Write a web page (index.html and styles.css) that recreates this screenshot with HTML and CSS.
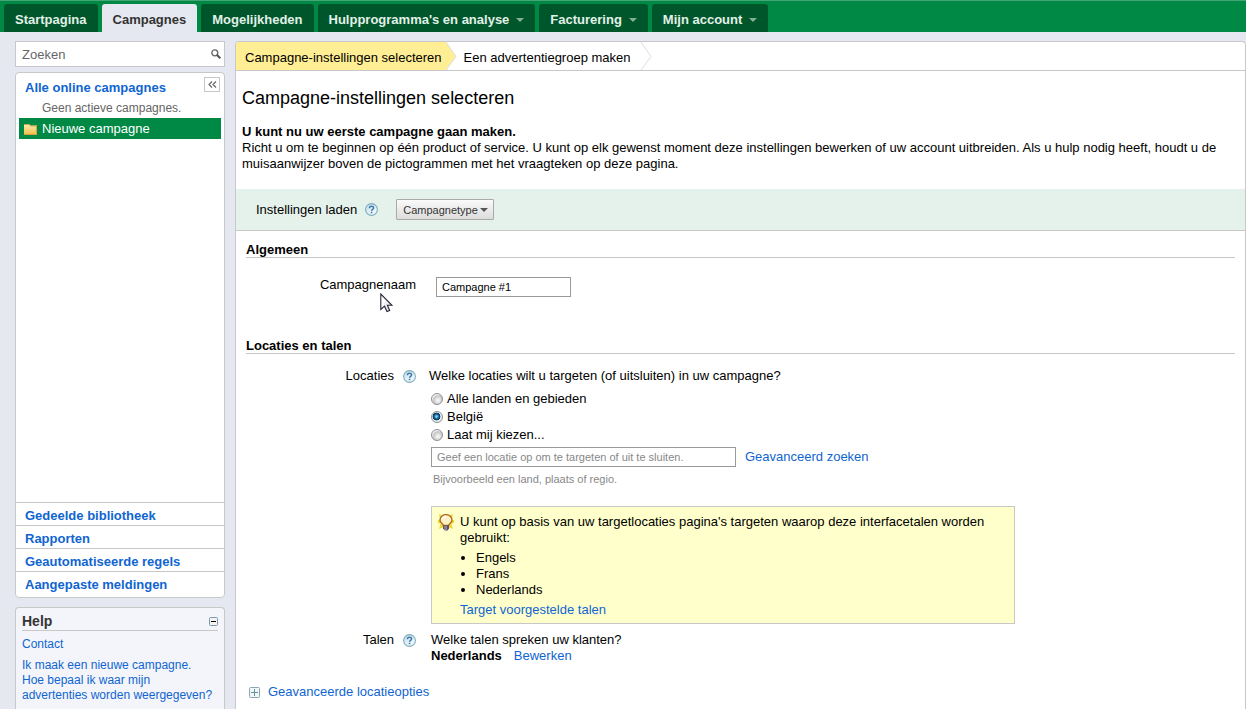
FILE: index.html
```
<!DOCTYPE html>
<html lang="nl">
<head>
<meta charset="utf-8">
<title>Campagne-instellingen selecteren</title>
<link rel="stylesheet" href="styles.css">
</head>
<body>
<svg class="defs" aria-hidden="true">
  <defs>
    <linearGradient id="helpFill" x1="0" y1="0" x2="1" y2="1"><stop offset="0" stop-color="#c4e0ec"/><stop offset="1" stop-color="#fafeff"/></linearGradient>
    <linearGradient id="folderFill" x1="0" y1="0" x2="0" y2="1"><stop offset="0" stop-color="#ffeeb4"/><stop offset="1" stop-color="#eebd4c"/></linearGradient>
    <linearGradient id="cursorFill" x1="0" y1="0" x2="1" y2="1"><stop offset="0.3" stop-color="#fff"/><stop offset="1" stop-color="#cfcfd6"/></linearGradient>
  </defs>
  <symbol id="help" viewBox="0 0 13 13">
    <circle cx="6.5" cy="6.5" r="5.9" fill="url(#helpFill)" stroke="#7fabba" stroke-width="1.1"/>
    <path d="M4.4 5.2c0-1.2.9-1.9 2.1-1.9s2.1.7 2.1 1.7c0 1.400-2 1.300-2 2.700M6.600 8.700v1.500" fill="none" stroke="#3f79b0" stroke-width="1.500"/>
  </symbol>
</svg>

<nav class="tabs">
  <a class="tab" href="#">Startpagina</a>
  <a class="tab tab-active" href="#">Campagnes</a>
  <a class="tab" href="#">Mogelijkheden</a>
  <a class="tab" href="#">Hulpprogramma's en analyse<span class="caret"></span></a>
  <a class="tab" href="#">Facturering<span class="caret"></span></a>
  <a class="tab" href="#">Mijn account<span class="caret"></span></a>
</nav>

<div class="page">
  <aside class="sidebar">
    <form class="search">
      <input class="search-input" type="text" placeholder="Zoeken" aria-label="Zoeken">
      <button class="search-button" type="button" aria-label="Zoek">
        <svg width="10" height="10" viewBox="0 0 10 10"><circle cx="3.800" cy="3.800" r="3" fill="none" stroke="#666" stroke-width="1.300"/><path d="M5.800 5.800L9.300 9.300" stroke="#555" stroke-width="2"/></svg>
      </button>
    </form>

    <section class="panel tree">
      <div class="tree-head">
        <a class="side-link" href="#">Alle online campagnes</a>
        <button class="collapse" type="button" aria-label="Inklappen">
          <svg width="9" height="7" viewBox="0 0 9 7"><path d="M4 .5L1 3.500L4 6.500M8 .5L5 3.500L8 6.500" fill="none" stroke="#666" stroke-width="1.200"/></svg>
        </button>
      </div>
      <p class="tree-empty">Geen actieve campagnes.</p>
      <a class="tree-item" href="#">
        <svg width="13" height="12" viewBox="0 0 13 12"><path d="M0 1H5L6.500 2.500H13V11.500H0Z" fill="url(#folderFill)"/><path d="M0 1.500H5L6.500 3H13" fill="none" stroke="#c9a452"/><path d="M12.500 3V11.500M0 11.500H13" fill="none" stroke="#d9a440"/></svg>
        Nieuwe campagne
      </a>
      <ul class="side-list">
        <li><a class="side-link" href="#">Gedeelde bibliotheek</a></li>
        <li><a class="side-link" href="#">Rapporten</a></li>
        <li><a class="side-link" href="#">Geautomatiseerde regels</a></li>
        <li><a class="side-link" href="#">Aangepaste meldingen</a></li>
      </ul>
    </section>

    <section class="panel helpbox">
      <div class="helpbox-head">
        <h2 class="helpbox-title">Help</h2>
        <button class="minimize" type="button" aria-label="Minimaliseren">
          <svg width="9" height="9" viewBox="0 0 9 9"><rect x=".5" y=".5" width="8" height="8" rx="1" fill="#f5f3ee" stroke="#7898b5"/><path d="M2 4.500H7" stroke="#000"/></svg>
        </button>
      </div>
      <p class="help-contact"><a href="#">Contact</a></p>
      <p class="help-links"><a href="#">Ik maak een nieuwe campagne.</a><br><a href="#">Hoe bepaal ik waar mijn advertenties worden weergegeven?</a></p>
    </section>
  </aside>

  <main class="main">
    <ol class="steps">
      <li class="step step-current">Campagne-instellingen selecteren</li>
      <li class="step-arrow"><svg width="12" height="28" viewBox="0 0 12 28"><path d="M0 0H1L11 14.500L1 28H0Z" fill="#ffee94"/><path d="M1 0L11 14.500L1 28" fill="none" stroke="#ddd"/></svg></li>
      <li class="step step-next">Een advertentiegroep maken</li>
      <li class="step-arrow"><svg width="12" height="28" viewBox="0 0 12 28"><path d="M1 0L11 14.500L1 28" fill="none" stroke="#ddd"/></svg></li>
    </ol>

    <header class="intro">
      <h1 class="title">Campagne-instellingen selecteren</h1>
      <p><strong>U kunt nu uw eerste campagne gaan maken.</strong></p>
      <p>Richt u om te beginnen op één product of service. U kunt op elk gewenst moment deze instellingen bewerken of uw account uitbreiden. Als u hulp nodig heeft, houdt u de muisaanwijzer boven de pictogrammen met het vraagteken op deze pagina.</p>
    </header>

    <div class="load">
      <label for="type">Instellingen laden</label>
      <svg class="help" width="13" height="13"><use href="#help"/></svg>
      <span class="select-wrap">
        <select class="select" id="type"><option>Campagnetype</option></select>
        <span class="select-caret"></span>
      </span>
    </div>

    <section class="section general">
      <h2 class="section-title">Algemeen</h2>
      <div class="row row-name">
        <label class="row-label" for="name">Campagnenaam</label>
        <input class="text name-input" id="name" type="text" value="Campagne #1">
        <svg class="cursor" width="13" height="20" viewBox="0 0 13 20"><path d="M.8 1V16.500L4.500 13.200L7 18.500L9.700 17.500L7.400 12.300H12Z" fill="url(#cursorFill)" stroke="#26263c" stroke-width="1.100"/></svg>
      </div>
    </section>

    <section class="section">
      <h2 class="section-title">Locaties en talen</h2>
      <div class="row row-loc">
        <div class="row-label">Locaties <svg class="help" width="13" height="13"><use href="#help"/></svg></div>
        <fieldset class="locations">
          <legend class="question">Welke locaties wilt u targeten (of uitsluiten) in uw campagne?</legend>
          <div class="inset">
            <label class="option"><input class="radio" type="radio" name="loc">Alle landen en gebieden</label>
            <label class="option"><input class="radio" type="radio" name="loc" checked>België</label>
            <label class="option"><input class="radio" type="radio" name="loc">Laat mij kiezen...</label>
            <div class="loc-search">
              <input class="text loc-input" type="text" aria-label="Locatie" placeholder="Geef een locatie op om te targeten of uit te sluiten.">
              <a href="#">Geavanceerd zoeken</a>
            </div>
            <p class="hint">Bijvoorbeeld een land, plaats of regio.</p>
            <div class="tip">
              <svg class="bulb" width="16" height="17" viewBox="0 0 16 17"><g fill="#f3d62e"><path d="M1 0L5 2L2 5ZM15 0L11 2L14 5ZM0 6H3V9H0ZM13 6H16V9H13ZM1 15L2.500 10L6 13ZM15 15L13.500 10L10 13ZM6 0H10V3H6Z"/><circle cx="8" cy="7.500" r="6.800" opacity=".55"/></g><path d="M5.300 11.500C5.300 9.700 2 9 2 5.900A6 5.300 0 0 1 14 5.900C14 9 10.700 9.700 10.700 11.500Z" fill="#fff0c4" stroke="#a8691f" stroke-width="1.300"/><path d="M4.500 5.500C4.800 3.500 6 2.500 8 2.500" fill="none" stroke="#fff" stroke-width="1.500"/><path d="M5 11.500H11V14.500L9.500 16.500H7L5 14.500Z" fill="#55506a"/><path d="M6 13H9M6.500 15H9" stroke="#bdb8c0"/></svg>
              <div>
                <p>U kunt op basis van uw targetlocaties pagina's targeten waarop deze interfacetalen worden gebruikt:</p>
                <ul class="languages"><li>Engels</li><li>Frans</li><li>Nederlands</li></ul>
                <a href="#">Target voorgestelde talen</a>
              </div>
            </div>
          </div>
        </fieldset>
      </div>
      <div class="row row-lang">
        <div class="row-label">Talen <svg class="help" width="13" height="13"><use href="#help"/></svg></div>
        <div class="inset">
          <p>Welke talen spreken uw klanten?</p>
          <p class="language"><strong>Nederlands</strong><a href="#">Bewerken</a></p>
        </div>
      </div>
      <a class="advanced" href="#">
        <svg width="11" height="11" viewBox="0 0 11 11"><rect x=".5" y=".5" width="10" height="10" rx="1" fill="#f0f7f9" stroke="#8ba6b1"/><path d="M2 5.500H9M5.500 2V9" stroke="#6d919f"/></svg>
        Geavanceerde locatieopties
      </a>
    </section>
  </main>
</div>
</body>
</html>
```

FILE: styles.css
```
* { box-sizing: border-box; }
body {
  display: flex;
  flex-direction: column;
  min-height: 100vh;
  margin: 0;
  background: #e5e8f0;
  color: #000;
  font: 13px/16px "Liberation Sans", Arial, sans-serif;
}
p, h1, h2, ul, ol, fieldset { margin: 0; padding: 0; border: 0; }
ul, ol { list-style: none; }
legend { padding: 0; }
svg { flex: none; display: block; }
input, select, button { font-family: inherit; margin: 0; }
button { padding: 0; cursor: pointer; }
a { color: #0f65d1; text-decoration: none; }
.defs { position: absolute; width: 0; height: 0; }

.tabs {
  display: flex;
  gap: 4px;
  padding: 3px 4px 0;
  background: #008945;
  border-top: 1px solid #45a576;
}
.tab {
  display: flex;
  align-items: center;
  height: 28px;
  padding: 3px 11px 0;
  border-radius: 3px 3px 0 0;
  background: #00562b;
  color: #e2f1e8;
  font-weight: bold;
  white-space: nowrap;
}
.tab-active { background: #e5e8f0; color: #333; }
.caret {
  margin-left: 7px;
  border: 4px solid transparent;
  border-top-color: #82b196;
  border-bottom: 0;
}

.page { display: flex; flex: 1; gap: 10px; padding: 9px 0 0 15px; }
.sidebar { display: flex; flex-direction: column; flex: none; width: 210px; }
.search {
  display: flex;
  align-items: center;
  height: 26px;
  margin-bottom: 5px;
  padding-right: 3px;
  background: #fff;
  border: 1px solid #c8c8c8;
}
.search-input {
  flex: 1;
  min-width: 0;
  padding: 0 6px;
  border: 0;
  background: none;
  font-size: 13px;
}
.search-input::placeholder { color: #666; opacity: 1; }
.search-button { border: 0; background: none; }

.panel { background: #fff; border: 1px solid #c8c8c8; border-radius: 4px; }
.tree { display: flex; flex-direction: column; min-height: 526px; padding-top: 4px; }
.tree-head { display: flex; justify-content: space-between; padding: 0 4px 0 9px; }
.side-link { font-weight: bold; line-height: 22px; }
.collapse {
  display: grid;
  place-items: center;
  width: 16px;
  height: 15px;
  border: 1px solid #c8c8c8;
  background: #fff;
}
.tree-empty { padding-left: 26px; color: #666; font-size: 12px; line-height: 18px; }
.tree-item {
  display: flex;
  align-items: center;
  gap: 5px;
  height: 21px;
  margin: 1px 3px 0;
  padding-left: 5px;
  background: #008945;
  color: #fff;
}
.side-list { margin-top: auto; }
.side-list li { height: 23px; padding: 2px 9px 0; border-top: 1px solid #c8c8c8; }
.side-list li:last-child { height: 26px; }
.helpbox {
  flex: 1;
  margin-top: 9px;
  padding: 5px 6px;
  border-bottom: 0;
  border-radius: 4px 4px 0 0;
  background: #f4f5fa;
}
.helpbox-head {
  display: flex;
  align-items: center;
  justify-content: space-between;
  border-bottom: 1px solid #c8c8c8;
}
.helpbox-title { font-size: 14px; line-height: 17px; color: #333; }
.minimize { border: 0; background: none; }
.help-contact { padding-top: 5px; font-size: 12px; }
.help-links { padding-top: 6px; font-size: 12px; line-height: 15px; }

.main {
  flex: 1;
  min-width: 0;
  background: #fff;
  border: 1px solid #c8c8c8;
  border-bottom: 0;
  border-radius: 4px 4px 0 0;
}
.steps { display: flex; border-bottom: 1px solid #c8c8c8; }
.step { height: 28px; padding: 2px 0 0 9px; line-height: 28px; white-space: nowrap; }
.step-current { padding-right: 3px; background: #ffee94; border-radius: 3px 0 0 0; }
.step-next { padding-left: 7px; padding-right: 9px; }
.intro { padding: 16px 20px 17px 6px; }
.title { margin-bottom: 15px; font-size: 18px; line-height: 22px; font-weight: normal; }
.load {
  display: flex;
  align-items: center;
  height: 42px;
  padding-left: 20px;
  background: #e5f2eb;
  border-bottom: 1px solid #c8c8c8;
}
.load .help { margin: 0 18px 0 8px; }
.select-wrap { position: relative; }
.select {
  display: block;
  appearance: none;
  width: 98px;
  height: 21px;
  padding: 0 6px;
  border: 1px solid #aaa;
  border-radius: 1px;
  background: linear-gradient(#fafafa, #dcdcdc);
  color: #333;
  font-size: 11px;
}
.select-caret {
  position: absolute;
  top: 9px;
  right: 6px;
  border: 4px solid transparent;
  border-top-color: #555;
  border-bottom: 0;
  pointer-events: none;
}

.section { padding: 11px 10px 0; }
.section-title {
  font-size: 13px;
  line-height: 15px;
  border-bottom: 1px solid #c8c8c8;
}
.general { min-height: 96px; }
.row { position: relative; display: grid; grid-template-columns: 170px 1fr; column-gap: 13px; }
.row-label { display: flex; align-items: center; justify-content: flex-end; gap: 9px; height: 16px; }
.row-name { column-gap: 20px; padding-top: 19px; }
.text {
  height: 20px;
  padding: 0 5px;
  border: 1px solid #999;
  background: #fff;
  color: #000;
  font-size: 11px;
}
.text::placeholder { color: #888; opacity: 1; }
.name-input { width: 135px; }
.cursor { position: absolute; left: 134px; top: 35px; }

.row-loc { padding-top: 14px; }
.locations { min-width: 0; }
.inset { padding-left: 2px; }
.question { margin-bottom: 6px; }
.option { display: flex; align-items: center; gap: 4px; width: max-content; height: 18px; }
.radio {
  appearance: none;
  width: 12px;
  height: 12px;
  border: 1px solid #8d8f90;
  border-radius: 50%;
  background: radial-gradient(circle at 60% 65%, #f4f4f4 10%, #c4c4c4 55%, #f0f0f0 65%);
}
.radio:checked { background: radial-gradient(circle at 45% 45%, #8fdcf5 0 6%, #1d78b0 24%, #0b3154 46%, #e8eff4 54%); }
.loc-search { display: flex; align-items: center; gap: 9px; padding-top: 3px; }
.loc-input { flex: 0 1 305px; min-width: 0; }
.hint { padding: 4px 2px 19px; font-size: 11px; color: #888; }
.tip {
  display: flex;
  gap: 6px;
  max-width: 584px;
  padding: 7px 20px 5px 6px;
  background: #ffffcc;
  border: 1px solid #c8c8c8;
}
.languages { padding: 4px 0 4px 16px; list-style: disc; }
.row-lang { padding-top: 8px; }
.language { display: flex; gap: 12px; }
.advanced { display: flex; align-items: center; gap: 8px; width: max-content; margin-top: 20px; padding-left: 3px; }
```
